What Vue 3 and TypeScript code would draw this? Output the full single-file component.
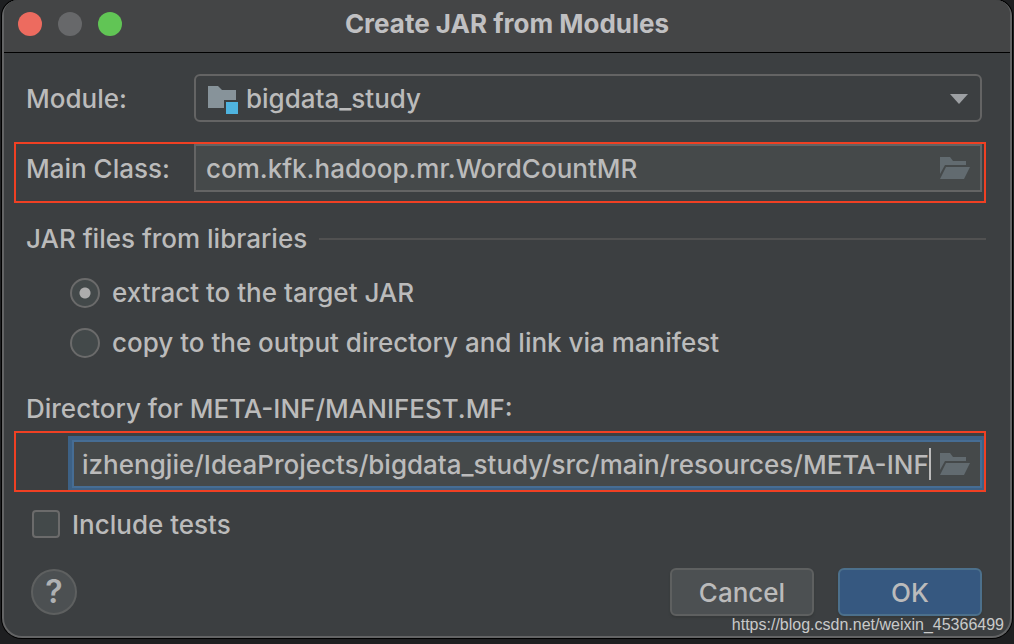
<script setup lang="ts">
import { ref } from 'vue'

const moduleName = ref('bigdata_study')
const mainClass = ref('com.kfk.hadoop.mr.WordCountMR')
const libraryMode = ref<'extract' | 'copy'>('extract')
const manifestDir = ref('izhengjie/IdeaProjects/bigdata_study/src/main/resources/META-INF')
const includeTests = ref(false)
</script>

<template>
  <div class="desktop">
    <form class="dialog" @submit.prevent>
      <header class="titlebar">
        <div class="lights">
          <button type="button" class="light close" aria-label="Close"></button>
          <button type="button" class="light idle" aria-label="Minimize" disabled></button>
          <button type="button" class="light zoom" aria-label="Zoom"></button>
        </div>
        <h1>Create JAR from Modules</h1>
      </header>

      <div class="body">
        <div class="row module">
          <label class="name" for="module">Module:</label>
          <div class="combo">
            <svg class="module-icon" width="30" height="28" viewBox="0 0 30 28" aria-hidden="true">
              <path d="M0 0h10l4 4h14v10H16v8H0z" fill="#87939a" />
              <path d="M18 16h12v12H18z" fill="#4fb4e0" />
            </svg>
            <select id="module" v-model="moduleName">
              <option>bigdata_study</option>
            </select>
            <svg class="arrow" width="18" height="10" viewBox="0 0 18 10" aria-hidden="true">
              <path d="M0 0h18L9 10z" fill="#9da0a3" />
            </svg>
          </div>
        </div>

        <div class="row marked">
          <label class="name" for="main-class">Main Class:</label>
          <div class="field">
            <input id="main-class" v-model="mainClass" type="text" spellcheck="false" />
            <button type="button" class="browse" aria-label="Browse main class">
              <svg width="30" height="22" viewBox="0 0 30 22" aria-hidden="true">
                <path d="M0 0h10l3 4h13v4H5L0 17z" />
                <path d="M6 10h24l-6 12H0z" />
              </svg>
            </button>
          </div>
        </div>

        <fieldset class="libraries">
          <legend class="section"><span>JAR files from libraries</span></legend>
          <label class="choice">
            <input v-model="libraryMode" type="radio" name="mode" value="extract" />
            extract to the target JAR
          </label>
          <label class="choice">
            <input v-model="libraryMode" type="radio" name="mode" value="copy" />
            copy to the output directory and link via manifest
          </label>
        </fieldset>

        <label class="dir-label" for="manifest">Directory for META-INF/MANIFEST.MF:</label>
        <div class="row marked directory">
          <div class="field focused">
            <input id="manifest" v-model="manifestDir" type="text" spellcheck="false" />
            <span class="caret"></span>
            <button type="button" class="browse" aria-label="Browse directory">
              <svg width="30" height="22" viewBox="0 0 30 22" aria-hidden="true">
                <path d="M0 0h10l3 4h13v4H5L0 17z" />
                <path d="M6 10h24l-6 12H0z" />
              </svg>
            </button>
          </div>
        </div>

        <label class="tests">
          <input v-model="includeTests" type="checkbox" />
          <span>Include tests</span>
        </label>

        <footer class="actions">
          <button type="button" class="help" aria-label="Help">?</button>
          <button type="button" class="btn">Cancel</button>
          <button type="submit" class="btn primary">OK</button>
        </footer>
      </div>
    </form>
    <a class="watermark" href="https://blog.csdn.net/weixin_45366499">https://blog.csdn.net/weixin_45366499</a>
  </div>
</template>

<style>
body {
  background: #1e1f21;
}
</style>

<style scoped>
.desktop {
  position: relative;
  box-sizing: border-box;
  min-height: 100vh;
  padding: 0 2px 6px;
  overflow: hidden;
  background: #1e1f21;
  color: #bbbbbb;
  font-family: Inter, "Noto Sans", sans-serif;
  font-size: 26px;
  font-weight: 450;
  line-height: 32px;
}
.dialog {
  border: 2px solid #636465;
  border-top: 0;
  border-radius: 16px 16px 20px 20px;
  box-shadow: 0 0 0 1px #000;
  background: #3c3f41;
}
button,
input,
select {
  box-sizing: border-box;
  margin: 0;
  padding: 0;
  border: 0;
  color: inherit;
  font: inherit;
  outline: none;
}
.titlebar {
  display: grid;
  grid-template-columns: 1fr auto 1fr;
  align-items: center;
  padding: 8px 14px 12px;
  border-bottom: 1px solid #000;
  border-radius: 14px 14px 0 0;
  background: #444546;
}
.lights {
  display: flex;
  gap: 16px;
}
.light {
  width: 24px;
  height: 24px;
  border-radius: 50%;
}
.close {
  background: #ed6b5f;
}
.idle {
  background: #67686a;
}
.zoom {
  background: #61c555;
}
h1 {
  margin: 0;
  font-size: 26px;
  font-weight: 700;
  line-height: 32px;
  color: #c0c0c2;
}
.body {
  display: flex;
  flex-direction: column;
  padding: 21px 24px 20px 10px;
}
.row {
  display: flex;
  align-items: center;
}
.module {
  margin-bottom: 20px;
  padding: 0 4px 0 12px;
}
.name {
  flex: 0 0 168px;
}
.name,
.combo select,
.tests span,
.btn {
  padding-top: 2px;
}
.combo,
.field {
  display: flex;
  flex: 1;
  align-items: center;
  box-sizing: border-box;
  min-width: 0;
  height: 48px;
  border: 2px solid #646464;
}
.combo {
  padding: 0 12px;
  border-radius: 6px;
}
.combo select {
  flex: 1;
  min-width: 0;
  height: 40px;
  margin: 0 8px;
  appearance: none;
  background: transparent;
}
.module-icon {
  margin-top: 4px;
}
.arrow {
  margin-top: 2px;
  pointer-events: none;
}
.marked {
  padding: 0 2px 9px 10px;
  overflow: hidden;
  border: 2px solid #f04023;
}
.field {
  padding: 0 10px;
  background: #45494a;
}
.field input {
  flex: 1;
  min-width: 0;
  height: 40px;
  background: transparent;
}
.browse {
  display: flex;
  background: transparent;
}
.browse svg {
  fill: #626b70;
}
.directory {
  padding: 7px 2px 2px 56px;
}
.focused {
  padding: 0 10px 0 8px;
  border-color: #466d94;
  box-shadow: 0 0 0 4px #3d6185;
}
.focused input {
  flex: 0 1 auto;
  field-sizing: content;
}
.caret {
  flex: none;
  width: 2px;
  height: 32px;
  margin-right: auto;
  background: #bbbbbb;
}
.libraries {
  display: flex;
  flex-direction: column;
  gap: 20px;
  min-width: 0;
  margin: 20px 0 35px;
  padding: 0;
  border: 0;
}
.section {
  display: flex;
  align-items: center;
  gap: 12px;
  box-sizing: border-box;
  width: 100%;
  margin-bottom: 23px;
  padding: 0 0 0 12px;
}
.section::after {
  flex: 1;
  height: 2px;
  background: #515151;
  content: "";
}
.choice {
  display: flex;
  align-items: center;
  gap: 12px;
  height: 30px;
  padding-left: 56px;
}
.choice input {
  width: 30px;
  height: 30px;
  border: 2px solid #6b6b6b;
  border-radius: 50%;
  appearance: none;
  background: #43494a;
}
.choice input:checked {
  background: radial-gradient(circle, #adadad 5px, #43494a 6px);
}
.dir-label {
  margin-bottom: 6px;
  padding-left: 12px;
}
.tests {
  display: flex;
  align-items: center;
  gap: 12px;
  height: 32px;
  margin: 16px 0 28px;
  padding-left: 18px;
}
.tests input {
  width: 28px;
  height: 28px;
  border: 2px solid #6b6b6b;
  border-radius: 4px;
  appearance: none;
  background: #43494a;
}
.actions {
  display: flex;
  align-items: center;
  gap: 24px;
  padding: 0 4px 0 17px;
}
.help {
  width: 46px;
  height: 46px;
  margin-right: auto;
  border: 2px solid #5e6060;
  border-radius: 50%;
  background: #4c5052;
  color: #afb1b3;
  font-size: 32px;
  font-weight: 600;
}
.btn {
  width: 144px;
  height: 48px;
  border: 2px solid #5e6060;
  border-radius: 6px;
  background: #4c5052;
  box-shadow: 0 2px 2px #36393a;
}
.primary {
  border-color: #4c708c;
  background: #365880;
}
.watermark {
  position: absolute;
  right: 10px;
  bottom: 9px;
  color: #c9caca;
  font-family: "Liberation Sans", Arial, sans-serif;
  font-size: 16px;
  font-weight: 400;
  line-height: 20px;
  text-decoration: none;
}
</style>
